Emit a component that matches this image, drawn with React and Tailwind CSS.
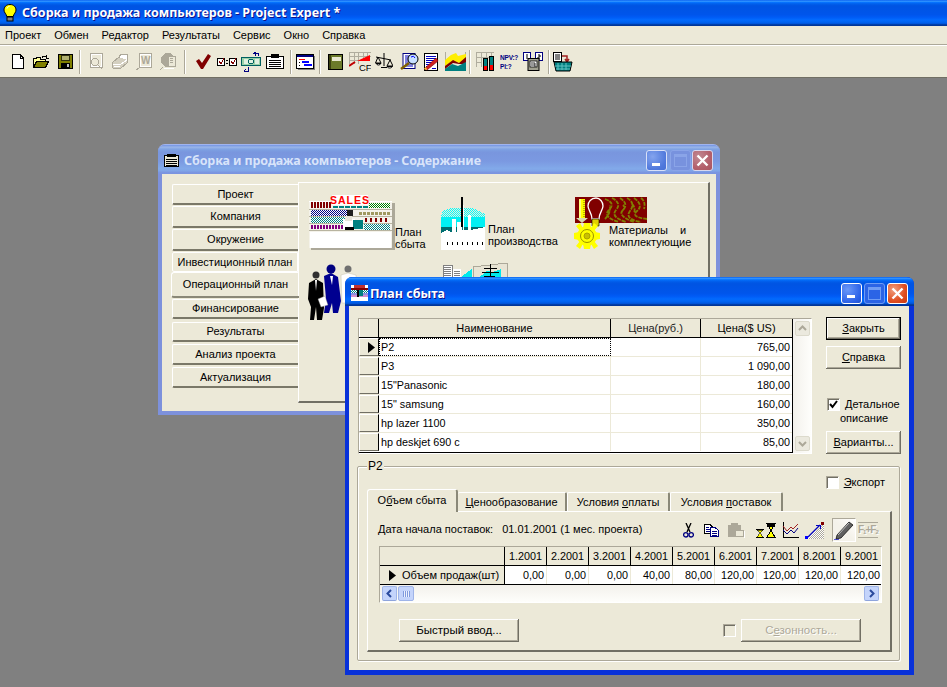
import { useId } from "react"

const Crisp = ({ w, h, className = "", children }) => (
  <svg width={w} height={h} viewBox={`0 0 ${w} ${h}`} shapeRendering="crispEdges" className={`block shrink-0 ${className}`}>
    {children}
  </svg>
)

// dithered fill for the little clip-art pictures
const Dither = ({ id, color, bg = "#fff" }) => (
  <pattern id={id} width="2" height="2" patternUnits="userSpaceOnUse">
    <rect width="2" height="2" fill={bg} />
    <rect width="1" height="1" fill={color} />
    <rect x="1" y="1" width="1" height="1" fill={color} />
  </pattern>
)

const Blocks = ({ x, y, n, w = 2, step = 3, h, fill }) => (
  <>
    {Array.from({ length: n }).map((_, i) => (
      <rect key={i} x={x + i * step} y={y} width={w} height={h} fill={fill} />
    ))}
  </>
)

const Bulb = () => (
  <svg width="14" height="18" viewBox="0 0 14 18" className="block shrink-0">
    <path d="M7 .5C3.2.5 1 3 1 6c0 2.6 2.2 3.700 2.800 6.500h6.400C10.800 9.700 13 8.600 13 6c0-3-2.200-5.500-6-5.500z" fill="#ffff00" stroke="#000" />
    <path d="M4 4.500C4.500 3 5.500 2.500 6.500 2.500" stroke="#fff" fill="none" />
    <rect x="4" y="13" width="6" height="4" fill="#808080" stroke="#000" />
  </svg>
)

const NewIcon = () => (
  <Crisp w={12} h={15}>
    <path d="M.5.5H8L11.500 4V14.500H.5Z" fill="#fff" stroke="#000" />
    <path d="M8 .5V4H11.500" fill="none" stroke="#000" />
  </Crisp>
)

const OpenIcon = () => (
  <Crisp w={16} h={13}>
    <path d="M.5 3.500H3L4 2.500H7V4.500H12V6.500H4L.5 12.500Z" fill="#ffff99" stroke="#000" />
    <path d="M.5 12.500L3.500 6.500H15.500L12.500 12.500Z" fill="#808000" stroke="#000" />
    <path d="M9 2.500Q11 .5 13 1.500M13 0V3H15.500" fill="none" stroke="#000" />
  </Crisp>
)

const SaveIcon = () => (
  <Crisp w={15} h={15}>
    <rect x=".5" y=".5" width="14" height="14" fill="#808000" stroke="#000" />
    <rect x="3" y="1" width="9" height="6" fill="#303010" />
    <rect x="4" y="2" width="7" height="4" fill="#b0b070" />
    <rect x="3" y="9" width="9" height="5" fill="#000" />
    <rect x="9" y="10" width="2" height="3" fill="#c0c0c0" />
  </Crisp>
)

const DisabledDoc = ({ children }) => (
  <Crisp w={17} h={18}>
    <path d="M3.500.5H15.500V14.500H3.500Z" fill="#ece9d8" stroke="#aca899" />
    <path d="M4.500 1.500H14.500V13.500H4.500Z" fill="none" stroke="#fff" />
    {children}
  </Crisp>
)

const DisabledPrinter = () => (
  <Crisp w={18} h={17}>
    <path d="M1 10L8 4H16V10L10 15H2Z" fill="#d4d0c0" stroke="#aca899" />
    <path d="M8 4L10 1H17L16 7" fill="#fff" stroke="#aca899" />
    <path d="M2 11H10L16 7M3 13H9" stroke="#fff" fill="none" />
  </Crisp>
)

const DisabledRound = () => (
  <Crisp w={17} h={18}>
    <circle cx="8" cy="7" r="7" fill="#aca899" />
    <rect x="8" y="3" width="7" height="10" fill="#ece9d8" stroke="#aca899" />
    <path d="M10 5H13M10 7H13M10 9H13" stroke="#aca899" />
    <path d="M3 14L0 17" stroke="#aca899" />
    <path d="M4 15H14" stroke="#fff" />
  </Crisp>
)

const CheckIcon = () => (
  <svg width="15" height="15" viewBox="0 0 15 15" className="block shrink-0">
    <path d="M0 7L3 5L6 9L12 0L15 2L7 15H5Z" fill="#800000" />
  </svg>
)

const CompareIcon = () => (
  <Crisp w={20} h={12}>
    <rect x=".5" y="2.500" width="7" height="7" fill="#fff" stroke="#000" />
    <rect x="12.500" y="2.500" width="7" height="7" fill="#fff" stroke="#000" />
    <path d="M2 5L4 8L7 2M14 5L16 8L19 2" fill="none" stroke="#800000" />
    <path d="M9 4H11M9 7H11" stroke="#000" />
  </Crisp>
)

const TransferIcon = () => (
  <Crisp w={21} h={20}>
    <rect x=".5" y="5.500" width="19" height="8" fill="#9ad0a8" stroke="#006060" />
    <rect x="3" y="7" width="4" height="5" fill="#e0f0e0" />
    <circle cx="10" cy="9.500" r="2.500" fill="#e0f0e0" stroke="#006060" />
    <rect x="14" y="7" width="4" height="5" fill="#e0f0e0" />
    <path d="M14 4V1M12 1H17V4M7 15V19H3M5 17L3 19L5 20" fill="none" stroke="#000080" />
    <path d="M13 1L14 0L15 1" stroke="#000080" fill="none" />
  </Crisp>
)

const ClipboardIcon = () => (
  <Crisp w={18} h={15}>
    <rect x=".5" y="2.500" width="17" height="12" fill="#fff" stroke="#000" />
    <rect x="5" y="0" width="8" height="4" fill="#000" />
    <path d="M3 6H15M3 8H15M3 10H15M3 12H15" stroke="#000" />
  </Crisp>
)

const GanttIcon = () => (
  <Crisp w={19} h={16}>
    <rect x="2" y="2" width="17" height="14" fill="#808080" />
    <rect x=".5" y=".5" width="17" height="14" fill="#fff" stroke="#000" />
    <rect x="1" y="1" width="16" height="2" fill="#000080" />
    <rect x="3" y="5" width="6" height="1" fill="#ff0000" />
    <rect x="6" y="7" width="7" height="2" fill="#0000ff" />
    <rect x="8" y="10" width="8" height="2" fill="#0000ff" />
    <rect x="3" y="8" width="1" height="1" fill="#000" />
    <rect x="3" y="11" width="1" height="1" fill="#000" />
  </Crisp>
)

const BookIcon = () => (
  <Crisp w={15} h={16}>
    <rect x=".5" y=".5" width="14" height="15" fill="#6b7a2a" stroke="#000" />
    <rect x="1" y="1" width="2" height="14" fill="#3b4010" />
    <rect x="4" y="3" width="9" height="4" fill="#e8e8d0" />
  </Crisp>
)

const CfIcon = () => (
  <svg width="22" height="19" viewBox="0 0 22 19" className="block shrink-0">
    <path d="M.5 1V12M5 1V12M9.500 1V12M14 1V8M18.500 1V5M0 .5H22M0 4.500H22M0 8.500H14" stroke="#b0ad9e" fill="none" shapeRendering="crispEdges" />
    <path d="M8 9L21 3V9Z" fill="#ff0000" />
    <path d="M0 14L6 10" stroke="#c00000" strokeWidth="2" />
    <text x="10" y="18.500" fontSize="9.500" fill="#000" fontFamily="Liberation Sans">CF</text>
  </svg>
)

const ScalesIcon = () => (
  <svg width="18" height="17" viewBox="0 0 18 17" className="block shrink-0" fill="none" stroke="#000">
    <path d="M9 0V13M6 14.500H12M1 4L16 7" />
    <path d="M3 4L.5 10H6ZM15 7L12 13H18Z" />
    <path d="M1 10.500C2 12.500 5 12.500 6 10.500ZM12 13.500C13 15.500 16 15.500 17.500 13.500Z" fill="#fff" />
  </svg>
)

const LensIcon = () => (
  <svg width="20" height="18" viewBox="0 0 20 18" className="block shrink-0">
    <rect x="3" y=".5" width="12" height="15" fill="#fff" stroke="#000080" />
    <path d="M5 3H13M5 5H10M5 7H10M5 9H10M5 11H13M5 13H13" stroke="#0000c0" />
    <circle cx="13" cy="6" r="5" fill="#c8e0ff" stroke="#000" />
    <path d="M9 10L1 16" stroke="#806000" strokeWidth="2.500" />
    <path d="M11 4Q14 2 15 5" stroke="#0000ff" fill="none" />
  </svg>
)

const PenDocIcon = () => (
  <svg width="16" height="18" viewBox="0 0 16 18" className="block shrink-0">
    <rect x="1.500" y=".5" width="13" height="17" fill="#fff" stroke="#000" />
    <path d="M3 3H13M3 5H13M3 7H13M3 9H10M3 11H8M3 13H7M9 15H13" stroke="#0000c0" shapeRendering="crispEdges" />
    <path d="M1 16L13 5L15 8L4 17Z" fill="#d02020" stroke="#800000" strokeWidth=".6" />
    <path d="M1 16L3 14L4 17Z" fill="#ffe040" />
  </svg>
)

const MountainIcon = () => (
  <svg width="21" height="19" viewBox="0 0 21 19" className="block shrink-0">
    <rect width="21" height="19" fill="#b0ad9e" />
    <rect x="1" y="0" width="19" height="18" fill="#ece9d8" />
    <path d="M0 8L6 3L11 1L13 4L21 2V9L14 11L8 9L0 14Z" fill="#ffee00" />
    <path d="M0 14L8 8L14 11L21 5V12L14 12L8 11L0 17Z" fill="#800000" />
    <path d="M0 19V17L7 12L13 14L21 10V19Z" fill="#008080" />
  </svg>
)

const BarsIcon = () => (
  <Crisp w={18} h={19}>
    <path d="M.5 0V15M5.500 0V15M10.500 0V5M15.500 0V5M0 .5H18M0 5.500H18M0 10.500H6" stroke="#b0ad9e" />
    <rect x="7.500" y="6.500" width="4" height="12" fill="#008080" stroke="#000" />
    <rect x="8" y="14" width="3" height="4" fill="#ff0000" />
    <rect x="13.500" y="4.500" width="4" height="14" fill="#008080" stroke="#000" />
    <rect x="14" y="13" width="3" height="5" fill="#ff0000" />
  </Crisp>
)

const NpvIcon = () => (
  <div className="w-[19px] shrink-0 text-[6.500px] tracking-[-0.2px] leading-[9px] font-bold text-[#000080] whitespace-nowrap">
    <div>NPV:?</div>
    <div>PI:?</div>
  </div>
)

const CompareBoxIcon = () => (
  <svg width="20" height="20" viewBox="0 0 20 20" className="block shrink-0">
    <rect x=".5" y=".5" width="7" height="8" fill="#fff" stroke="#000080" />
    <rect x="12.500" y=".5" width="7" height="8" fill="#fff" stroke="#000080" />
    <path d="M4 2V7M15 3H17V5H15V7H17" stroke="#000" fill="none" />
    <rect x="5" y="6.500" width="11" height="12" fill="#a0a090" stroke="#000" />
    <rect x="7" y="9" width="7" height="6" fill="#fff" stroke="#000" strokeWidth=".8" />
    <path d="M9 10V14M11 10V14H13M11 12H13" stroke="#000" fill="none" strokeWidth=".8" />
  </svg>
)

const BasketIcon = () => (
  <svg width="20" height="20" viewBox="0 0 20 20" className="block shrink-0">
    <rect x=".5" y=".5" width="8" height="9" fill="#fff" stroke="#000" />
    <path d="M2 3H7M2 5H7M2 7H7" stroke="#000" />
    <path d="M9 4H14V9M12 7L14 10L16 7" stroke="#a02020" fill="none" strokeWidth="1.500" />
    <path d="M1 10H19L17 19H3Z" fill="#008080" stroke="#000" />
    <path d="M5 11V18M9 11V18M13 11V18M2 14H18M3 17H17" stroke="#60c0c0" />
  </svg>
)

const Sep = ({ className }) => <div className={`w-[2px] h-[24px] shrink-0 border-l border-[#aca899] border-r-[1px] border-r-white ${className}`} />

const SalesPic = () => {
  const id = useId()
  return (
    <Crisp w={86} h={56}>
      <defs>
        <Dither id={id + "g"} color="#008000" />
        <Dither id={id + "b"} color="#000080" />
        <Dither id={id + "t"} color="#008080" />
      </defs>
      <rect x="2" y="8" width="84" height="47" fill="#aca899" />
      <rect x="0" y="6" width="83" height="47" fill="#f4f2ea" />
      <rect x="0" y="6" width="83" height="1" fill="#fff" />
      <Blocks x={2} y={7} n={7} w={2} step={3} h={6} fill="#800000" />
      <rect x="60" y="8" width="21" height="5" fill={`url(#${id}g)`} />
      <rect x="0" y="14" width="83" height="1" fill="#b8b4a0" />
      <rect x="2" y="15" width="42" height="6" fill={`url(#${id}b)`} />
      <Blocks x={50} y={17} n={8} w={3} step={4} h={3} fill="#a09860" />
      <rect x="0" y="21" width="83" height="1" fill="#b8b4a0" />
      <rect x="2" y="22" width="38" height="6" fill={`url(#${id}t)`} />
      <Blocks x={56} y={23} n={5} w={2} step={5} h={4} fill="#800000" />
      <rect x="0" y="28" width="83" height="1" fill="#b8b4a0" />
      <Blocks x={2} y={30} n={12} w={2} step={3} h={4} fill="#800080" />
      <rect x="55" y="29" width="26" height="6" fill={`url(#${id}t)`} />
      <rect x="0" y="35" width="83" height="1" fill="#b8b4a0" />
      <rect x="1" y="37" width="81" height="16" fill="#fff" />
      <rect x="23" y="0" width="36" height="10" fill="#fff" />
      <Blocks x={24} y={11} n={6} w={5} step={6} h={2} fill="#008080" />
      <text x="41" y="9" textAnchor="middle" fontSize="10.500" fontWeight="700" fill="#ff0000" letterSpacing="1" fontFamily="Liberation Sans" shapeRendering="auto">SALES</text>
      <rect x="38" y="15" width="6" height="6" fill="#202020" />
      <rect x="34" y="24" width="12" height="11" fill="#fff" />
      <rect x="36" y="21" width="7" height="5" fill="#e8e4d8" />
      <rect x="44" y="25" width="10" height="9" fill="#008080" />
      <rect x="36" y="32" width="9" height="3" fill="#000" />
    </Crisp>
  )
}

const FactoryPic = () => {
  const id = useId()
  return (
    <Crisp w={44} h={53}>
      <defs>
        <Dither id={id + "c"} color="#00ffff" bg="#ece9d8" />
      </defs>
      <path d="M2 14L10 11H32L44 17V22H0V18Z" fill={`url(#${id}c)`} />
      <path d="M0 20H44V30H0Z" fill="#00f0f4" />
      <path d="M0 30H44V38H0Z" fill="#006e70" />
      <path d="M0 36L6 33L12 36L20 33H30L44 30V53H0Z" fill="#fff" />
      <rect x="11" y="22" width="4" height="16" fill="#fff" />
      <rect x="16" y="25" width="5" height="13" fill="#fff" />
      <rect x="27" y="18" width="3" height="20" fill="#fff" />
      <rect x="20" y="0" width="2" height="30" fill="#000" />
      <rect x="22" y="8" width="1" height="25" fill="#fff" />
      <Blocks x={6} y={45} n={8} w={1} step={5} h={3} fill="#000" />
    </Crisp>
  )
}

const MaterialsPic = () => (
  <svg width="74" height="53" viewBox="0 0 74 53" className="block shrink-0">
    <rect x="1" y="0" width="72" height="26" fill="#800000" />
    <path d="M31 2Q42 6 35 13T45 25M38 1Q48 6 42 13T52 25M46 1Q55 7 49 13T60 25M53 1Q62 6 56 14T67 25M60 1Q70 8 63 14T73 22M67 1Q72 5 70 12M31 22Q37 16 36 8M48 14Q52 11 49 8M58 7Q62 11 60 16" fill="none" stroke="#808000" strokeWidth="1.800" strokeDasharray="4 1" />
    <rect x="5" y="2" width="6" height="19" fill="#ffff00" />
    <path d="M6 2V21" stroke="#fff" />
    <path d="M10 3V21" stroke="#707000" strokeDasharray="1 1" />
    <path d="M2 21H14L8 26Z" fill="#d8d8b0" />
    <path d="M22 1C17 1 14 5 14 9C14 13 18 16 18 22H25C25 16 29 13 29 9C29 5 26 1 22 1Z" fill="#800000" stroke="#fff" strokeWidth="1.300" />
    <path d="M18 22H25V29H18Z" fill="#e0d000" stroke="#000" strokeWidth=".6" />
    <g fill="#ffff00">
      <circle cx="13" cy="39" r="10" />
      <path d="M10 26H16L17 31H9ZM10 52H16L17 47H9ZM0 36V42L5 43V35ZM26 36V42L21 43V35ZM2 29L6 26L9 31L6 34ZM24 29L20 26L17 31L20 34ZM2 49L6 52L9 47L6 44ZM24 49L20 52L17 47L20 44Z" />
    </g>
    <circle cx="13" cy="39" r="6.500" fill="#ffff00" stroke="#9a9000" />
    <circle cx="13" cy="39" r="3" fill="#c8c000" stroke="#b0a000" />
  </svg>
)

const PeoplePic = () => (
  <svg width="50" height="58" viewBox="0 0 50 58" className="block shrink-0">
    <g>
      <circle cx="40" cy="6" r="3.500" fill="#707070" />
      <path d="M33 12L40 10L48 12L50 40H34Z" fill="#fff" stroke="#c8c4b0" strokeWidth=".5" />
    </g>
    <g>
      <circle cx="23" cy="6" r="4.500" fill="#000080" />
      <path d="M16 13L23 10L30 14L33 38L30 50H25L24 40L21 50H16L18 36Z" fill="#000090" />
      <path d="M22 13L25 13L24 22Z" fill="#fff" />
    </g>
    <g>
      <circle cx="8" cy="12" r="3.500" fill="#303030" />
      <path d="M1 20L8 16L15 20L16 45L14 57H9L8 44L6 57H2L3 44L0 36Z" fill="#000" />
      <path d="M7 17H9L8 28Z" fill="#fff" />
      <path d="M10 36L17 33L20 42L13 44Z" fill="#fff" stroke="#808080" strokeWidth=".4" />
    </g>
  </svg>
)

const FourthPic = () => (
  <Crisp w={65} h={16}>
    <rect x="0" y="2" width="9" height="14" fill="#fff" stroke="#808080" />
    <path d="M1 4H8M1 6H8M1 8H8M1 10H8M1 12H8" stroke="#808080" />
    <rect x="10" y="6" width="8" height="10" fill="#fff" />
    <path d="M11 8H17M11 10H17M11 12H17" stroke="#808080" />
    <path d="M19 13L29 6V16H19Z" fill="#00e8ec" />
    <path d="M30 4L64 0V16H30Z" fill="#e8e4d4" stroke="#aca899" />
    <path d="M34 16L44 8L50 9L58 6V16Z" fill="#00e8ec" />
    <path d="M47 1V16M41 5H54M39 9H56M41 13H52" stroke="#000" />
  </Crisp>
)

const PlanIcon = () => {
  const id = useId()
  return (
    <Crisp w={17} h={16}>
      <defs>
        <Dither id={id} color="#008080" />
      </defs>
      <rect x="0" y="0" width="17" height="16" fill="#fff" />
      <rect x="3" y="0" width="11" height="3" fill="#c03030" />
      <rect x="0" y="3" width="17" height="2" fill="#800000" />
      <rect x="0" y="5" width="17" height="3" fill={`url(#${id})`} />
      <rect x="0" y="8" width="17" height="2" fill="#9090e0" />
      <rect x="0" y="10" width="17" height="2" fill="#d090d0" />
      <rect x="8" y="5" width="4" height="6" fill="#008080" />
      <rect x="6" y="5" width="2" height="7" fill="#000" />
    </Crisp>
  )
}

const ContentsIcon = () => (
  <Crisp w={15} h={13}>
    <rect x=".5" y="1.500" width="14" height="11" fill="#ece9d8" stroke="#000" />
    <rect x="3" y="0" width="9" height="3" fill="#000" />
    <path d="M2 5H13M2 7H13M2 9H13M2 11H13" stroke="#000" />
  </Crisp>
)

const CapBtn = ({ kind, active, size = "w-[21px] h-[21px]" }) => {
  const tone =
    kind === "close"
      ? active
        ? "bg-[radial-gradient(circle_at_30%_30%,#f0a080,#e04e20_60%,#c83810)] border-white"
        : "bg-[radial-gradient(circle_at_30%_30%,#c08a94,#b4606c_60%,#a85560)] border-[#d8d8ee]"
      : kind === "min"
        ? active
          ? "bg-[radial-gradient(circle_at_30%_30%,#6a98f8,#2c62e8_70%,#2050d0)] border-white"
          : "bg-[radial-gradient(circle_at_30%_30%,#84a4ee,#4f78dc_70%,#4770d4)] border-[#d8e0f8]"
        : active
          ? "bg-[#2b64e6] border-[#6f9cf4]"
          : "bg-[#7892de] border-[#8aa4e8]"
  return (
    <div className={`${size} shrink-0 rounded-[3px] border flex items-center justify-center ${tone}`}>
      {kind === "min" && <div className="w-[8px] h-[3px] bg-white mt-[7px] -ml-[2px]" />}
      {kind === "max" && <div className={`w-[13px] h-[13px] border ${active ? "border-[#6f9cf4] border-t-[3px]" : "border-[#8aa4e8] border-t-[3px]"}`} />}
      {kind === "close" && (
        <svg width="13" height="13" viewBox="0 0 13 13">
          <path d="M1.500 1.500L11.500 11.500M11.500 1.500L1.500 11.500" stroke="#fff" strokeWidth="2.400" />
        </svg>
      )}
    </div>
  )
}

const CheckBox = ({ checked, disabled, className = "" }) => (
  <div className={`w-[13px] h-[13px] shrink-0 flex items-center justify-center border border-t-[#aca899] border-l-[#aca899] border-r-white border-b-white ${disabled ? "bg-[#ece9d8]" : "bg-white"} shadow-[inset_1px_1px_#716f64] ${className}`}>
    {checked && (
      <svg width="9" height="9" viewBox="0 0 9 9">
        <path d="M1 4L3.500 7L8 1" fill="none" stroke="#000" strokeWidth="2" />
      </svg>
    )}
  </div>
)

const Btn = ({ children, className = "", def, disabled }) => (
  <div
    className={`flex items-center justify-center ${def ? "border border-black shadow-[inset_-1px_-1px_#716f64,inset_1px_1px_#fff,inset_-2px_-2px_#aca899]" : "shadow-[inset_-1px_-1px_#716f64,inset_1px_1px_#fff,inset_-2px_-2px_#aca899]"} ${disabled ? "text-[#aca899] [text-shadow:1px_1px_#fff]" : "text-black"} ${className}`}
  >
    {children}
  </div>
)

const NavTab = ({ label, className, active }) => (
  <div
    className={`flex items-center justify-center text-[11px] text-black ${active ? "w-[128px] -ml-px relative z-10 rounded-l-[3px] border-t border-l border-white border-b-2 border-b-[#8a8878]" : "w-[126px] rounded-l-[2px] border-t border-l border-white border-b-2 border-b-[#7a7868]"} ${className}`}
  >
    {label}
  </div>
)

const navTabs = [
  { label: "Проект", cls: "h-[21px] mb-[1px]" },
  { label: "Компания", cls: "h-[22px] mb-[1px]" },
  { label: "Окружение", cls: "h-[22px] mb-[1px]" },
  { label: "Инвестиционный план", cls: "h-[20px] border-b-white! border-b! border-r border-r-white" },
  { label: "Операционный план", cls: "h-[26px]", active: true },
  { label: "Финансирование", cls: "h-[20px] mt-[1px] mb-[3px]" },
  { label: "Результаты", cls: "h-[20px] mb-[2px]" },
  { label: "Анализ проекта", cls: "h-[21px] mb-[2px]" },
  { label: "Актуализация", cls: "h-[21px]" },
]

const products = [
  ["P2", "765,00"],
  ["P3", "1 090,00"],
  ['15"Panasonic', "180,00"],
  ['15" samsung', "160,00"],
  ["hp lazer 1100", "350,00"],
  ["hp deskjet 690 c", "85,00"],
]

const months = [
  ["1.2001", "0,00"],
  ["2.2001", "0,00"],
  ["3.2001", "0,00"],
  ["4.2001", "40,00"],
  ["5.2001", "80,00"],
  ["6.2001", "120,00"],
  ["7.2001", "120,00"],
  ["8.2001", "120,00"],
  ["9.2001", "120,00"],
]

const Arrow = () => (
  <svg width="7" height="11" viewBox="0 0 7 11" className="block shrink-0">
    <path d="M0 0L7 5.500L0 11Z" fill="#000" />
  </svg>
)

const ScrollBtn = ({ dir, blue }) => (
  <div className={`w-[15px] h-[15px] rounded-[2px] flex items-center justify-center border ${blue ? "bg-[#c4d4fb] border-[#9fb4e8] border-b-[#8ea4dc]" : "bg-[#ebe9de] border-[#dcdacc]"}`}>
    <svg width="9" height="9" viewBox="0 0 9 9" fill="none" stroke={blue ? "#2a4a9c" : "#aca899"} strokeWidth="2">
      {dir === "up" && <path d="M1 6L4.500 2.500L8 6" />}
      {dir === "down" && <path d="M1 3L4.500 6.500L8 3" />}
      {dir === "left" && <path d="M6 1L2.500 4.500L6 8" />}
      {dir === "right" && <path d="M3 1L6.500 4.500L3 8" />}
    </svg>
  </div>
)

const ProductTable = () => (
  <div className="w-[454px] h-[136px] flex border border-t-[#aca899] border-l-[#aca899] border-r-white border-b-white">
    <div className="w-[434px] h-[134px] border-r border-b border-black bg-white text-[10.800px] text-black">
      <div className="flex h-[19px] border-b border-black bg-[#ece9d8] text-[11px]">
        <div className="w-[20px] border-r border-black border-l border-l-white" />
        <div className="w-[232px] border-r border-black flex items-center justify-center">Наименование</div>
        <div className="w-[90px] border-r border-black flex items-center justify-center text-[#222]">Цена(руб.)</div>
        <div className="flex-1 flex items-center justify-center">Цена($ US)</div>
      </div>
      {products.map(([name, price], i) => (
        <div key={name} className="flex h-[19px] border-b border-[#ece9d8] last:border-b-0 last:h-[18px]">
          <div className="w-[20px] bg-[#ece9d8] border-r border-black border-b border-b-[#716f64] border-t border-t-white border-l border-l-white flex items-center justify-end pr-[3px]">
            {i === 0 && <Arrow />}
          </div>
          <div className={`w-[232px] flex items-center ${i === 0 ? "border border-dotted border-black pl-px" : "pl-[2px] border-r border-[#ece9d8]"}`}>{name}</div>
          <div className="w-[90px] border-r border-[#ece9d8]" />
          <div className="flex-1 flex items-center justify-end pr-[2px]">{price}</div>
        </div>
      ))}
    </div>
    <div className="flex-1 h-[134px] flex flex-col justify-between items-center py-[2px] bg-[linear-gradient(90deg,#f3f1ec,#fefefb)]">
      <ScrollBtn dir="up" />
      <ScrollBtn dir="down" />
    </div>
  </div>
)

const Scissors = () => (
  <svg width="11" height="15" viewBox="0 0 11 15" className="block shrink-0" fill="none" stroke="#000080" strokeWidth="1.300">
    <path d="M3 0L7 9M8 0L4 9" stroke="#000" />
    <circle cx="2.800" cy="11.800" r="2.200" />
    <circle cx="8.200" cy="11.800" r="2.200" />
  </svg>
)

const CopyIcon = () => (
  <Crisp w={15} h={13}>
    <path d="M.5.5H6L8 2.500V9.500H.5Z" fill="#fff" stroke="#000" />
    <path d="M6.500 3.500H11L14.500 6.500V12.500H6.500Z" fill="#fff" stroke="#000080" />
    <path d="M2 3H5M2 5H6M2 7H6M8 7H13M8 9H13M8 11H13" stroke="#000080" />
  </Crisp>
)

const PasteDisabled = () => (
  <Crisp w={17} h={15}>
    <rect x="0" y="2" width="13" height="12" fill="#aca899" />
    <rect x="3" y="0" width="7" height="3" fill="#aca899" />
    <rect x="7.500" y="7.500" width="8" height="6" fill="#ece9d8" stroke="#aca899" />
    <path d="M1 15H17M16 8V15" stroke="#fff" />
  </Crisp>
)

const Hourglasses = () => (
  <Crisp w={20} h={15}>
    <path d="M0 6H8M0 14H8" stroke="#000" transform="translate(0 .5)" />
    <path d="M1 7L4 10L1 14H7L4 10L7 7Z" fill="#ffff00" stroke="#000" strokeWidth=".6" />
    <path d="M10 .5H20M10 14.500H20" stroke="#000" />
    <path d="M11 1L15 7.500L11 14H19L15 7.500L19 1Z" fill="#ffff00" stroke="#000" />
    <rect x="11" y="1" width="8" height="3" fill="#000" />
  </Crisp>
)

const LineChart = () => (
  <svg width="17" height="16" viewBox="0 0 17 16" className="block shrink-0" fill="none">
    <path d="M1 0V15H17" stroke="#000" shapeRendering="crispEdges" />
    <path d="M1 4L5 9L9 5L11 7L16 2" stroke="#a02020" />
    <path d="M1 8L5 12L9 8L12 11L16 6" stroke="#000080" />
  </svg>
)

const TrendIcon = () => {
  const id = useId()
  return (
    <Crisp w={19} h={17}>
      <defs>
        <Dither id={id} color="#aca899" bg="#fff" />
      </defs>
      <path d="M19 2V17H2Z" fill={`url(#${id})`} />
      <path d="M3 15L15 3" stroke="#0000c0" strokeWidth="1.200" shapeRendering="auto" />
      <path d="M11 3H15V7" stroke="#0000c0" fill="none" />
      <rect x="0" y="14" width="3" height="3" fill="#0000ff" />
      <rect x="16" y="0" width="3" height="3" fill="#800000" />
    </Crisp>
  )
}

const PenIcon = () => (
  <svg width="20" height="20" viewBox="0 0 20 20" className="block">
    <path d="M3 15L15 2L19 5L7 18L2 19Z" fill="#606060" stroke="#000" strokeWidth=".7" />
    <path d="M4 15L15 3" stroke="#c0c0c0" />
    <path d="M0 20H5" stroke="#0000c0" strokeWidth="1.300" />
  </svg>
)

const FormulaIcon = () => (
  <div className="w-[20px] h-[16px] shrink-0 text-[#aca899] text-[10px] leading-none font-bold [text-shadow:1px_1px_#fff] border-y border-[#aca899] flex items-center whitespace-nowrap tracking-[-1px]">
    F<sub className="text-[6px]">1</sub>+F<sub className="text-[6px]">2</sub>
  </div>
)

const SalesChart = () => (
  <div className="ml-[11px] mt-[4px] w-[503px] h-[57px] border border-t-[#aca899] border-l-[#aca899] border-r-white border-b-white bg-[#ece9d8] text-[10.800px] text-black overflow-hidden">
    <div className="flex h-[19px] border-b border-black w-[900px]">
      <div className="w-[125px] border-r border-black" />
      {months.map(([m]) => (
        <div key={m} className="w-[42px] shrink-0 border-r border-black flex items-center justify-end pr-[4px]">
          {m}
        </div>
      ))}
    </div>
    <div className="flex h-[19px] border-b border-black w-[900px]">
      <div className="w-[125px] border-r border-black flex items-center pl-[9px] gap-[6px] text-[11px]">
        <Arrow />
        Объем продаж(шт)
      </div>
      {months.map(([m, v]) => (
        <div key={m} className="w-[42px] shrink-0 bg-white border-r border-[#ece9d8] flex items-center justify-end pr-[2px]">
          {v}
        </div>
      ))}
    </div>
    <div className="h-[17px] w-[501px] flex items-center justify-between pl-[2px] pr-[2px] bg-[linear-gradient(180deg,#f3f1ec,#fefefb)]">
      <div className="flex items-center gap-[1px]">
        <ScrollBtn dir="left" blue />
        <div className="w-[16px] h-[15px] rounded-[2px] bg-[#c4d4fb] border border-[#9fb4e8] flex items-center justify-center">
          <div className="w-[7px] h-[6px] bg-[repeating-linear-gradient(90deg,#7f9ade_0,#7f9ade_1px,#eef2fd_1px,#eef2fd_2px)]" />
        </div>
      </div>
      <ScrollBtn dir="right" blue />
    </div>
  </div>
)

const DetailTabs = () => (
  <div className="flex items-end ml-[9px] h-[22px] text-black">
    <div className="w-[91px] h-[23px] relative z-10 -mb-px bg-[#ece9d8] border-t border-l border-white border-r-2 border-r-[#8a8878] rounded-t-[3px] flex items-center justify-center pb-[1px]">
      <span>
        О<u>б</u>ъем сбыта
      </span>
    </div>
    <div className="w-[109px] h-[19px] border-t border-white border-r-2 border-r-[#8a8878] rounded-t-[2px] flex items-center justify-center">
      <span>
        <u>Ц</u>енообразование
      </span>
    </div>
    <div className="w-[103px] h-[19px] border-t border-l border-white border-r-2 border-r-[#8a8878] rounded-t-[2px] flex items-center justify-center">
      <span>
        Условия <u>о</u>платы
      </span>
    </div>
    <div className="w-[113px] h-[19px] border-t border-l border-white border-r-2 border-r-[#8a8878] rounded-t-[2px] flex items-center justify-center">
      <span>
        Условия <u>п</u>оставок
      </span>
    </div>
  </div>
)

const DetailPanel = () => (
  <div className="ml-[9px] w-[525px] h-[141px] border-t border-l border-white border-r-2 border-r-[#716f64] border-b-2 border-b-[#716f64]">
    <div className="flex items-center h-[24px] mt-[6px] pl-[10px] text-black">
      <div className="w-[264px] whitespace-nowrap -mt-[2px]">
        Дата начала поставок:<span className="ml-[9px]">01.01.2001 (1 мес. проекта)</span>
      </div>
      <div className="ml-[41px]"><Scissors /></div>
      <div className="ml-[10px]"><CopyIcon /></div>
      <div className="ml-[9px]"><PasteDisabled /></div>
      <div className="ml-[11px]"><Hourglasses /></div>
      <div className="ml-[6px]"><LineChart /></div>
      <div className="ml-[6px]"><TrendIcon /></div>
      <div className="ml-[8px] w-[24px] h-[24px] flex items-center justify-center border border-t-[#aca899] border-l-[#aca899] border-r-white border-b-white bg-[linear-gradient(45deg,#f4f2ea_50%,#ffffff)]">
        <PenIcon />
      </div>
      <div className="ml-[2px]"><FormulaIcon /></div>
    </div>
    <SalesChart />
    <div className="flex items-center mt-[16px]">
      <Btn className="ml-[31px] w-[120px] h-[23px] text-[11.500px]">Быстрый ввод...</Btn>
      <CheckBox disabled className="ml-[204px]" />
      <Btn disabled className="ml-[5px] w-[120px] h-[23px] text-[11.500px]">
        <span>
          С<u>е</u>зонность...
        </span>
      </Btn>
    </div>
  </div>
)

const ContentsWindow = () => (
  <section className="absolute left-[158px] top-[66px] w-[562px] h-[271px] rounded-t-[7px] bg-[#7d91dc] p-[4px] pt-0 border-t border-[#a0b4ee]">
    <header className="h-[29px] -mx-[4px] rounded-t-[7px] pl-[6px] pr-[7px] pt-[2px] flex items-center bg-[linear-gradient(180deg,#7697e7,#7e9ee3_3%,#94afe8_6%,#97b4e9_8%,#82a5e4_14%,#7c9fe2_17%,#7996de_25%,#7b99e1_56%,#82a9e9_81%,#80a5e7_89%,#7b96e1_94%,#7a93df)]">
      <ContentsIcon />
      <h2 className="ml-[5px] mt-[1px] text-[12.500px] font-bold tracking-[-0.1px] text-[#d8e4fa] font-['Noto_Sans',sans-serif] whitespace-nowrap">
        Сборка и продажа компьютеров - Содержание
      </h2>
      <div className="ml-auto flex gap-[1px]">
        <CapBtn kind="min" size="w-[21px] h-[21px] mr-[2px]" />
        <CapBtn kind="max" />
        <CapBtn kind="close" />
      </div>
    </header>
    <div className="h-[237px] bg-[#ece9d8] flex items-start pl-[10px] pt-[8px]">
      <nav className="w-[126px] pt-[2px] flex flex-col">
        {navTabs.map((t) => (
          <NavTab key={t.label} label={t.label} className={t.cls} active={t.active} />
        ))}
      </nav>
      <div className="relative w-[412px] h-[221px] border-t border-l border-white border-r-2 border-r-[#716f64] border-b-2 border-b-[#716f64] text-[11px] leading-[12px] text-black">
        <div className="absolute left-[10px] top-[12px]"><SalesPic /></div>
        <div className="absolute left-[96px] top-[43px]">
          План
          <br />
          сбыта
        </div>
        <div className="absolute left-[142px] top-[14px]"><FactoryPic /></div>
        <div className="absolute left-[189px] top-[40px]">
          План
          <br />
          производства
        </div>
        <div className="absolute left-[275px] top-[14px]"><MaterialsPic /></div>
        <div className="absolute left-[310px] top-[41px] whitespace-pre">
          {"Материалы    и"}
          <br />
          комплектующие
        </div>
        <div className="absolute left-[9px] top-[80px]"><PeoplePic /></div>
        <div className="absolute left-[144px] top-[80px]"><FourthPic /></div>
      </div>
    </div>
  </section>
)

const PlanWindow = () => (
  <section className="absolute left-[345px] top-[199px] w-[569px] h-[398px] rounded-t-[7px] bg-[#0831d9] pl-[4px] pr-[5px] pb-[5px]">
    <header className="h-[29px] -ml-[4px] -mr-[5px] rounded-t-[7px] pl-[6px] pr-[6px] pt-[3px] flex items-center bg-[linear-gradient(180deg,#0058ee_0%,#3593ff_4%,#288eff_6%,#127dff_8%,#036ffc_10%,#0262ee_14%,#0057e5_20%,#0054e3_24%,#0055eb_56%,#005bf5_66%,#026afe_76%,#0062ef_86%,#0052d6_92%,#0040ab_94%,#003092_100%)]">
      <PlanIcon />
      <h2 className="ml-[2px] mt-[2px] text-[12.500px] font-bold text-white font-['Noto_Sans',sans-serif] [text-shadow:1px_1px_#0f1089] whitespace-nowrap">План сбыта</h2>
      <div className="ml-auto flex gap-[2px]">
        <CapBtn kind="min" active />
        <CapBtn kind="max" active />
        <CapBtn kind="close" active />
      </div>
    </header>
    <div className="h-[364px] bg-[#ece9d8] pl-[8px] pt-[12px] relative text-black text-[11px]">
      <div className="flex items-start h-[136px]">
        <div className="ml-px">
          <ProductTable />
        </div>
        <aside className="ml-[14px] w-[75px] flex flex-col">
          <Btn def className="w-[75px] h-[23px] -mt-[1px]">
            <span><u>З</u>акрыть</span>
          </Btn>
          <Btn className="w-[75px] h-[23px] mt-[6px]">
            <span><u>С</u>правка</span>
          </Btn>
          <div className="flex items-center mt-[28px] pl-px h-[14px]">
            <CheckBox checked />
            <span className="ml-[5px] whitespace-nowrap"><u>Д</u>етальное</span>
          </div>
          <div className="pl-[14px] leading-[14px]">описание</div>
          <Btn className="w-[75px] h-[23px] mt-[6px]">
            <span><u>В</u>арианты...</span>
          </Btn>
        </aside>
      </div>
      <div className="relative mt-[12px] w-[543px] h-[195px] border border-[#aca899] shadow-[1px_1px_#fff,inset_1px_1px_#fff] rounded-[2px]">
        <div className="absolute left-[9px] -top-[8px] px-px bg-[#ece9d8] text-[12px] leading-[14px]">P2</div>
        <div className="absolute right-[14px] top-[7px] flex items-center">
          <CheckBox />
          <span className="ml-[5px]"><u>Э</u>кспорт</span>
        </div>
        <div className="pt-[22px]">
          <DetailTabs />
          <DetailPanel />
        </div>
      </div>
    </div>
  </section>
)

const menu = ["Проект", "Обмен", "Редактор", "Результаты", "Сервис", "Окно", "Справка"]

export default function App() {
  return (
    <div className="w-[947px] h-[687px] relative overflow-hidden flex flex-col bg-[#808080] font-['Liberation_Sans',Arial,sans-serif] text-black">
      <div className="h-[26px] shrink-0 flex items-center pl-[3px] bg-[linear-gradient(180deg,#0058ee_0%,#3593ff_4%,#288eff_6%,#127dff_8%,#036ffc_10%,#0262ee_14%,#0057e5_20%,#0054e3_24%,#0055eb_56%,#005bf5_66%,#026afe_76%,#0062ef_86%,#0052d6_92%,#0040ab_94%,#003092_100%)]">
        <Bulb />
        <h1 className="ml-[5px] text-[12.500px] font-bold text-white font-['Noto_Sans',sans-serif] [text-shadow:1px_1px_#0f1089] whitespace-nowrap">
          Сборка и продажа компьютеров - Project Expert *
        </h1>
      </div>
      <div className="h-[19px] shrink-0 flex items-center gap-[13px] pl-[5px] bg-[#ece9d8] text-[11px] border-b border-[#aca899]">
        {menu.map((m) => (
          <span key={m}>{m}</span>
        ))}
      </div>
      <div className="h-[33px] shrink-0 flex items-center bg-[#ece9d8] border-t border-white border-b border-b-[#716f64]">
        <div className="ml-[12px]"><NewIcon /></div>
        <div className="ml-[9px]"><OpenIcon /></div>
        <div className="ml-[9px]"><SaveIcon /></div>
        <Sep className="ml-[6px]" />
        <div className="ml-[6px]"><DisabledDoc><circle cx="8" cy="9" r="3.500" fill="none" stroke="#aca899" /><path d="M11 12L15 16" stroke="#aca899" /></DisabledDoc></div>
        <div className="ml-[7px]"><DisabledPrinter /></div>
        <div className="ml-[7px]"><DisabledDoc><text x="5" y="11" fontSize="10" fontWeight="700" fill="#aca899" fontFamily="Liberation Sans">W</text><path d="M3 15L0 17" stroke="#aca899" /></DisabledDoc></div>
        <div className="ml-[7px]"><DisabledRound /></div>
        <Sep className="ml-[7px]" />
        <div className="ml-[10px]"><CheckIcon /></div>
        <div className="ml-[6px]"><CompareIcon /></div>
        <div className="ml-[4px]"><TransferIcon /></div>
        <div className="ml-[4px]"><ClipboardIcon /></div>
        <Sep className="ml-[6px]" />
        <div className="ml-[4px]"><GanttIcon /></div>
        <Sep className="ml-[4px]" />
        <div className="ml-[7px]"><BookIcon /></div>
        <div className="ml-[6px]"><CfIcon /></div>
        <div className="ml-[4px]"><ScalesIcon /></div>
        <div className="ml-[7px]"><LensIcon /></div>
        <div className="ml-[3px]"><PenDocIcon /></div>
        <div className="ml-[6px]"><MountainIcon /></div>
        <Sep className="ml-[3px]" />
        <div className="ml-[5px]"><BarsIcon /></div>
        <div className="ml-[6px]"><NpvIcon /></div>
        <div className="ml-[4px]"><CompareBoxIcon /></div>
        <Sep className="ml-[5px]" />
        <div className="ml-[3px]"><BasketIcon /></div>
      </div>
      <main className="flex-1 relative">
        <ContentsWindow />
        <PlanWindow />
      </main>
    </div>
  )
}
